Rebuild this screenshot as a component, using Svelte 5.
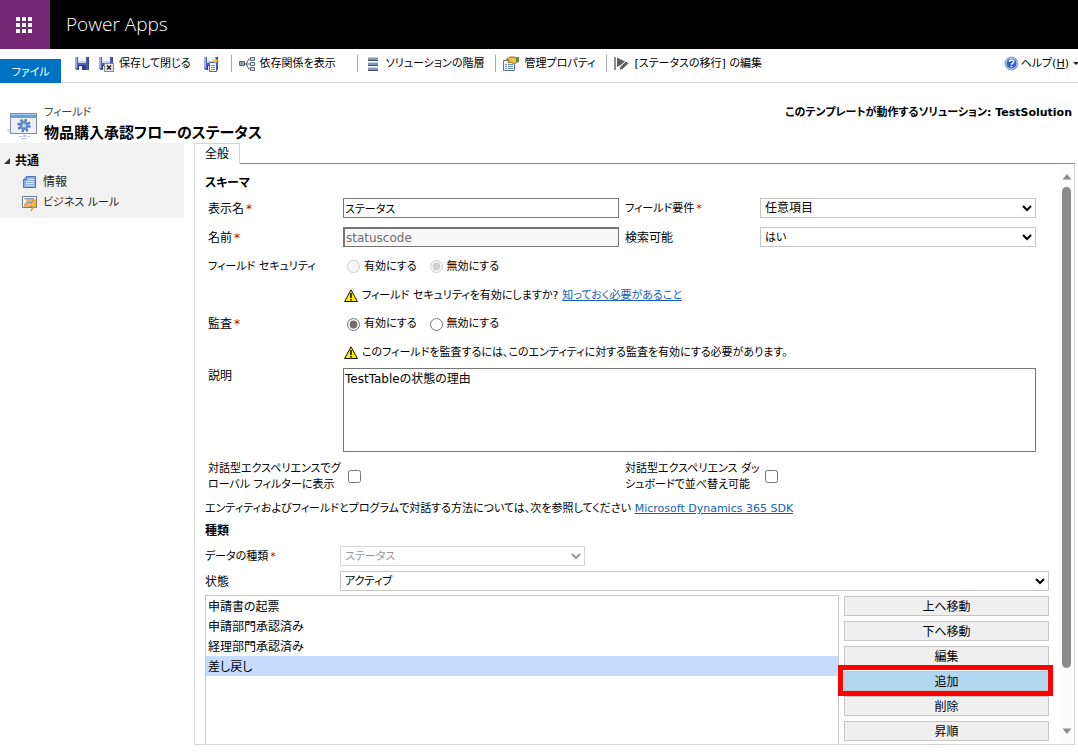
<script lang="ts">
	interface NavItem {
		id: string;
		text: string;
	}

	const navItems: NavItem[] = [
		{ id: 'info', text: '情報' },
		{ id: 'rules', text: 'ビジネス ルール' }
	];

	const statusOptions = ['申請書の起票', '申請部門承認済み', '経理部門承認済み', '差し戻し'];
	const listActions = ['上へ移動', '下へ移動', '編集', '追加', '削除', '昇順'];
	const activeAction = '追加';

	let displayName = $state('ステータス');
	let description = $state('TestTableの状態の理由');
	let requirement = $state('任意項目');
	let searchable = $state('はい');
	let stateValue = $state('アクティブ');
	let security = $state('off');
	let audit = $state('on');
	let selected = $state(['差し戻し']);
	let globalFilter = $state(false);
	let sortable = $state(false);
</script>

{#snippet floppy()}
	<path d="M1 1h14v13H2.500L1 12.500z" fill="#5561b8" />
	<path d="M1 1h2v11.500l-2-1z" fill="#a3abe6" />
	<path d="M13.500 1H15v13h-1.500z" fill="#39439a" />
	<path d="M4 1h8v6H4z" fill="#f3f6fd" />
	<path d="M4 5h8v2H4z" fill="#c6d0f0" />
	<path d="M4 9h8v5H4z" fill="#2f3880" />
	<path d="M5 10h3v4H5z" fill="#e3e8f6" />
{/snippet}

{#snippet warning()}
	<svg class="warn-icon" width="14" height="14" viewBox="0 0 14 14" aria-hidden="true">
		<path d="M7 .8L13.400 12.500H.6z" fill="#ffea00" stroke="#111" stroke-linejoin="round" />
		<path d="M6.200 4h1.600v5H6.200zM6.200 10h1.600v1.500H6.200z" fill="#111" />
	</svg>
{/snippet}

<div class="app">
	<header class="suite-bar">
		<button type="button" class="launcher" aria-label="アプリ起動ツール">
			<svg width="16" height="16" viewBox="0 0 16 16" fill="#fff">
				{#each [0, 6, 12] as y}
					{#each [0, 6, 12] as x}
						<rect {x} {y} width="4" height="4" />
					{/each}
				{/each}
			</svg>
		</button>
		<span class="suite-name">Power Apps</span>
	</header>

	<nav class="ribbon">
		<button type="button" class="file-tab">ファイル</button>
		<div class="tools">
			<button type="button" class="tool save" aria-label="保存">
				<svg width="16" height="16" viewBox="0 0 16 16">{@render floppy()}</svg>
			</button>
			<button type="button" class="tool save-close">
				<svg width="16" height="16" viewBox="0 0 16 16">
					{@render floppy()}
					<rect x="6.500" y="7.500" width="9" height="8" fill="#e4e4e4" stroke="#8a8a8a" />
					<path d="M9 9.500l4 4m0-4l-4 4" stroke="#222" stroke-width="1.500" />
				</svg>
				保存して閉じる
			</button>
			<button type="button" class="tool save-new" aria-label="保存して新規作成">
				<svg width="16" height="16" viewBox="0 0 16 16">
					{@render floppy()}
					<path d="M6.500 6.500h7v9h-7z" fill="#f4f7fd" stroke="#4c6ca8" />
					<path d="M8 9.500h4M8 11.500h4M8 13.500h4" stroke="#6a8ccc" />
					<path d="M12.500 1l1 2.800L16 4.800l-2.500 1-1 2.700-1-2.700L9 4.800l2.500-1z" fill="#f5c54a" />
				</svg>
			</button>
			<button type="button" class="tool ruled dependencies">
				<svg width="16" height="16" viewBox="0 0 16 16">
					<path d="M5 8h6M7 8l3-5h1M7 8l3 5h1" fill="none" stroke="#4f5a6c" />
					<path d="M.5 5.500h5v4h-5z" fill="#8fa3be" stroke="#55667d" />
					<path d="M11.500 1.500h4v3h-4zM11.500 6.500h4v3h-4zM11.500 11.500h4v3h-4z" fill="#dce3ec" stroke="#55667d" />
				</svg>
				依存関係を表示
			</button>
			<button type="button" class="tool ruled hierarchy">
				<svg width="12" height="16" viewBox="0 0 12 16">
					<path d="M1 1h10v4H1zM1 6h10v4H1zM1 11h10v4H1z" fill="#8198bd" />
					<path d="M1 1.500h10M1 6.500h10M1 11.500h10" stroke="#c3d0e4" />
					<path d="M1 4.500h10M1 9.500h10M1 14.500h10" stroke="#424b5e" />
				</svg>
				ソリューションの階層
			</button>
			<button type="button" class="tool ruled">
				<svg width="16" height="16" viewBox="0 0 16 16">
					<path d="M.5 4.500h11v10H.5z" fill="#f5f8fc" stroke="#5c78a4" />
					<path d="M2 8.500h2M5 8.500h5M2 10.500h2M5 10.500h5M2 12.500h2M5 12.500h5" stroke="#6c8cc0" />
					<path d="M3 4l4-3h5l2 2v3l-3 2-3-2-2 1-1-1 1-2z" fill="#eebf48" stroke="#9a7121" />
					<path d="M13 1h3v5l-3 1z" fill="#5b8c4a" />
				</svg>
				管理プロパティ
			</button>
			<button type="button" class="tool ruled">
				<svg width="15" height="16" viewBox="0 0 15 16">
					<path d="M1 1v13" stroke="#666" stroke-width="1.500" />
					<path d="M3 1.500l9 4.500-9 5z" fill="#606060" />
					<path d="M5 14.500l1-4 6-5.500 3 2.500-6.500 6z" fill="#606060" stroke="#fff" />
				</svg>
				[ステータスの移行] の編集
			</button>
		</div>
		<button type="button" class="tool help">
			<svg width="15" height="15" viewBox="0 0 15 15">
				<circle cx="7.500" cy="7.500" r="6.500" fill="#2f62c8" stroke="#8faadc" />
				<circle cx="7.500" cy="7.500" r="5.500" fill="none" stroke="#dce7fb" />
				<path d="M5.500 6c0-2.600 4.200-2.600 4.200-.2 0 1.400-2.200 1.500-2.200 3" fill="none" stroke="#fff" stroke-width="1.500" />
				<path d="M6.700 9.800h1.600v1.500H6.700z" fill="#fff" />
			</svg>
			<span>ヘルプ(<u>H</u>)</span>
			<svg class="caret" width="5" height="4" viewBox="0 0 5 4"><path d="M0 0h6L3 3z" fill="#222" /></svg>
		</button>
	</nav>

	<div class="record-head">
		<svg class="record-icon" width="32" height="28" viewBox="0 0 32 28" aria-hidden="true">
			<path d="M0 18l5-2v6z" fill="#dcdfe3" />
			<rect x="4.500" y="1.500" width="26" height="20" fill="#eef0f3" stroke="#7d8fa6" />
			<path d="M5 2h25v4H5z" fill="#6ba0d4" />
			<path d="M5 2h25v1H5z" fill="#a6cbec" />
			<circle cx="18" cy="13.500" r="5.500" fill="none" stroke="#4a76b8" stroke-width="2.500" stroke-dasharray="2.200 2.120" />
			<circle cx="18" cy="13.500" r="3.500" fill="#c5d8f2" stroke="#5f8ccb" stroke-width="2.500" />
			<circle cx="18" cy="13.500" r="1.500" fill="#fff" stroke="#3f68a8" stroke-width=".5" />
			<path d="M13 24h3v1h-3zM17 23h3v2h-3zM21 24h3v1h-3zM15 26h6v1h-6z" fill="#b9cbe6" />
		</svg>
		<div class="record-titles">
			<span class="entity">フィールド</span>
			<h1>物品購入承認フローのステータス</h1>
		</div>
		<p class="solution">このテンプレートが動作するソリューション: TestSolution</p>
	</div>

	<div class="workspace">
		<aside class="side-nav">
			<h2>
				<svg width="7" height="7" viewBox="0 0 7 7"><path d="M6 0v6H0z" fill="#333" /></svg>
				共通
			</h2>
			{#each navItems as item (item.id)}
				<a href="#{item.id}">
					{#if item.id === 'info'}
						<svg width="16" height="16" viewBox="0 0 16 16">
							<path d="M4.500 2.500h9v11h-12v-8z" fill="#8eace6" stroke="#5570b0" />
							<path d="M4.500 2.500v3h-3z" fill="#e9f0fc" stroke="#5570b0" />
							<path d="M6 5.500h6M4 7.500h8M4 9.500h8M4 11.500h8" stroke="#dbe7fb" />
						</svg>
					{:else}
						<svg width="16" height="16" viewBox="0 0 16 16">
							<path d="M.5 1.500h14v11H.5z" fill="#f1f4f8" stroke="#6b7c96" />
							<path d="M3 4h8v2H5v2h5v3H3V9h4" fill="none" stroke="#e8954b" stroke-width="1.500" />
							<path d="M2 3.500h10M6 7.500h5" stroke="#8c9bb0" />
							<path d="M12 5l-4 6h3l-2 5 6-7h-3l3-4z" fill="#fbcf3c" stroke="#b4801b" stroke-width=".7" />
						</svg>
					{/if}
					<span class:kana={item.id === 'rules'}>{item.text}</span>
				</a>
			{/each}
		</aside>

		<main class="editor">
			<div class="tabs">
				<button type="button" class="tab">全般</button>
			</div>
			<div class="panel">
				<form class="form" onsubmit={(e) => e.preventDefault()}>
					<h3>スキーマ</h3>
					<div class="schema">
						<label for="display-name">表示名<em>*</em></label>
						<input id="display-name" class="kana" type="text" bind:value={displayName} />
						<label class="second kana" for="requirement">フィールド要件<em>*</em></label>
						<select id="requirement" bind:value={requirement}>
							<option>任意項目</option>
						</select>

						<label for="name">名前<em>*</em></label>
						<input id="name" type="text" value="statuscode" disabled />
						<label class="second" for="searchable">検索可能</label>
						<select id="searchable" class="kana" bind:value={searchable}>
							<option>はい</option>
							<option>いいえ</option>
						</select>

						<span id="security-label" class="caption kana">フィールド セキュリティ</span>
						<div class="radios" role="radiogroup" aria-labelledby="security-label">
							<label><input type="radio" bind:group={security} value="on" disabled />有効にする</label>
							<label><input type="radio" bind:group={security} value="off" disabled />無効にする</label>
						</div>
						<p class="notice kana">
							{@render warning()}
							フィールド セキュリティを有効にしますか? <a href="#security">知っておく必要があること</a>
						</p>

						<span id="audit-label" class="caption">監査<em>*</em></span>
						<div class="radios" role="radiogroup" aria-labelledby="audit-label">
							<label><input type="radio" bind:group={audit} value="on" />有効にする</label>
							<label><input type="radio" bind:group={audit} value="off" />無効にする</label>
						</div>
						<p class="notice kana">
							{@render warning()}
							このフィールドを監査するには、このエンティティに対する監査を有効にする必要があります。
						</p>

						<label class="top" for="description">説明</label>
						<textarea id="description" bind:value={description}></textarea>

						<label class="kana" for="global-filter">対話型エクスペリエンスでグ<br />ローバル フィルターに表示</label>
						<input id="global-filter" type="checkbox" bind:checked={globalFilter} />
						<label class="second kana" for="sortable">対話型エクスペリエンス ダッ<br />シュボードで並べ替え可能</label>
						<input id="sortable" type="checkbox" bind:checked={sortable} />
					</div>

					<p class="sdk kana">
						エンティティおよびフィールドとプログラムで対話する方法については、次を参照してください
						<a href="#sdk">Microsoft Dynamics 365 SDK</a>
					</p>

					<h3 class="type-head">種類</h3>
					<div class="type-row">
						<label class="kana" for="data-type">データの種類<em>*</em></label>
						<select id="data-type" class="short kana" disabled>
							<option>ステータス</option>
						</select>
					</div>
					<div class="type-row">
						<label for="state">状態</label>
						<select id="state" class="kana" bind:value={stateValue}>
							<option>アクティブ</option>
							<option>非アクティブ</option>
						</select>
					</div>
					<div class="options">
						<select class="option-list" multiple size="10" aria-label="状態のオプション" bind:value={selected}>
							{#each statusOptions as option}
								<option>{option}</option>
							{/each}
						</select>
						<div class="actions">
							{#each listActions as action}
								<div class="action" class:highlight={action === activeAction}>
									<button type="button">{action}</button>
								</div>
							{/each}
						</div>
					</div>
				</form>
				<div class="scrollbar" aria-hidden="true">
					<svg width="10" height="6" viewBox="0 0 10 6"><path d="M5 0l4.500 5.500h-9z" fill="#8b8b8b" /></svg>
					<div class="track"><div class="thumb"></div></div>
					<svg width="10" height="6" viewBox="0 0 10 6"><path d="M.5.5h9L5 6z" fill="#8b8b8b" /></svg>
				</div>
			</div>
		</main>
	</div>
</div>

<style>
	:global(body) {
		margin: 0;
		background: #fff;
	}

	.app {
		display: flex;
		flex-direction: column;
		box-sizing: border-box;
		height: 100vh;
		padding-bottom: 10px;
		overflow: hidden;
		font-family: 'DejaVu Sans', 'Noto Sans CJK JP', sans-serif;
		font-size: 12px;
		font-feature-settings: 'palt';
		line-height: 16px;
		color: #000;
	}

	svg {
		flex: none;
		display: block;
	}

	button,
	input,
	select,
	textarea {
		margin: 0;
		font: inherit;
		font-feature-settings: inherit;
		color: inherit;
		border-radius: 0;
		box-sizing: border-box;
	}

	h1,
	h2,
	h3,
	p {
		margin: 0;
	}

	a {
		color: #1160b7;
	}

	.kana,
	.tool,
	.file-tab,
	.entity,
	.solution,
	.radios {
		font-size: 11px;
	}

	/* Black suite bar */
	.suite-bar {
		flex: none;
		display: flex;
		align-items: center;
		gap: 16px;
		height: 49px;
		background: #000;
	}

	.launcher {
		display: flex;
		align-items: center;
		justify-content: center;
		width: 50px;
		height: 49px;
		padding: 0 2px 0 0;
		border: 0;
		background: #742774;
	}

	.suite-name {
		padding-bottom: 2px;
		font-family: 'Open Sans', 'Noto Sans', sans-serif;
		font-weight: 300;
		font-size: 19px;
		color: #fff;
	}

	/* Ribbon */
	.ribbon {
		flex: none;
		display: flex;
		align-items: flex-start;
		height: 34px;
		box-sizing: border-box;
		border-bottom: 1px solid #d6d6d6;
	}

	.file-tab {
		flex: none;
		align-self: flex-end;
		width: 61px;
		height: 24px;
		margin-bottom: -1px;
		padding: 4px 0 0;
		border: 0;
		background: #0072c6;
		color: #fff;
	}

	.tools {
		flex: 1;
		display: flex;
		padding: 6px 0 0 13px;
	}

	.tool {
		display: flex;
		align-items: center;
		gap: 5px;
		height: 17px;
		padding: 0;
		border: 0;
		background: none;
		line-height: 17px;
		white-space: nowrap;
	}

	.save {
		margin-right: 8px;
	}

	.save-close,
	.save-new {
		margin-right: 12px;
	}

	.ruled {
		padding: 0 11px 0 7px;
		border-left: 1px solid #a5a8b0;
	}

	.dependencies {
		padding-right: 21px;
	}

	.hierarchy {
		gap: 7px;
		padding-left: 9px;
	}

	.help {
		gap: 2px;
		margin-top: 6px;
	}

	.caret {
		margin-left: 2px;
	}

	/* Record heading */
	.record-head {
		flex: none;
		display: flex;
		height: 60px;
		padding: 0 6px;
	}

	.record-icon {
		margin-top: 29px;
	}

	.record-titles {
		flex: 1;
		display: flex;
		flex-direction: column;
		padding: 22px 0 0 6px;
		white-space: nowrap;
	}

	.entity {
		color: #444;
	}

	h1 {
		font-size: 15px;
		line-height: 24px;
	}

	.solution {
		padding-top: 22px;
		font-weight: bold;
	}

	/* Workspace */
	.workspace {
		flex: 1;
		display: flex;
		align-items: flex-start;
		gap: 10px;
		min-height: 0;
		padding-right: 3px;
	}

	.side-nav {
		flex: none;
		box-sizing: border-box;
		width: 184px;
		padding: 9px 4px 5px;
		background: #f1f1f1;
	}

	.side-nav h2 {
		display: flex;
		align-items: center;
		gap: 4px;
		font-size: 12px;
		line-height: 19px;
	}

	.side-nav a {
		display: flex;
		align-items: center;
		gap: 5px;
		height: 21px;
		padding-left: 18px;
		color: #222;
		text-decoration: none;
	}

	.editor {
		flex: 1;
		align-self: stretch;
		display: flex;
		flex-direction: column;
		min-width: 0;
	}

	.tabs {
		flex: none;
		display: flex;
		height: 21px;
	}

	.tabs::after {
		content: '';
		flex: 1;
		border-bottom: 1px solid #8a8a8f;
	}

	.tab {
		width: 46px;
		height: 21px;
		padding: 0;
		border: 1px solid #d6d6d6;
		border-bottom: 0;
		background: #fff;
	}

	.panel {
		flex: 1;
		display: flex;
		min-height: 0;
		border: 1px solid #d6d6d6;
		border-top: 0;
	}

	.form {
		flex: 1;
		min-width: 0;
		padding: 10px 10px 0;
		overflow: hidden;
	}

	h3 {
		font-size: 12px;
		line-height: 19px;
	}

	em {
		margin-left: 2px;
		font-style: normal;
		color: #b00000;
	}

	.schema {
		display: grid;
		grid-template-columns: 135px minmax(0, 1fr) 141px minmax(0, 1fr);
		grid-template-rows: repeat(4, 29px) 28px 29px 88px 44px;
		align-items: center;
		padding: 0 13px 0 3px;
		white-space: nowrap;
	}

	.schema > label,
	.caption,
	.radios,
	.notice,
	.type-row label {
		padding-top: 2px;
	}

	.schema > .second {
		padding-left: 6px;
	}

	.radios,
	.notice,
	textarea {
		grid-column: 2 / -1;
	}

	.top {
		align-self: start;
	}

	input[type='text'] {
		width: 100%;
		height: 20px;
		padding: 1px 1px 0;
		border: 1px solid #767676;
		background: #fff;
	}

	input[type='text']:disabled {
		border-width: 2px 1px 1px 2px;
		background: #f8f8f8;
		color: #6d6d6d;
	}

	select {
		width: 100%;
		height: 20px;
		padding: 1px 0 0;
		border: 1px solid #c6c6c6;
		background: #fff;
	}

	select:disabled {
		color: #6d6d6d;
	}

	.radios {
		display: flex;
		gap: 9px;
	}

	.radios label {
		display: flex;
		align-items: center;
		gap: 4px;
	}

	input[type='radio'] {
		width: 13px;
		height: 13px;
		margin-left: 4px;
		accent-color: #6f6f6f;
	}

	input[type='checkbox'] {
		width: 13px;
		height: 13px;
		margin-left: 5px;
	}

	.notice {
		display: flex;
		align-items: center;
		gap: 4px;
	}

	.warn-icon {
		margin-left: 1px;
	}

	textarea {
		height: 84px;
		padding: 2px 1px;
		border: 1px solid #767676;
		line-height: 16px;
		resize: none;
	}

	.sdk {
		padding-top: 1px;
		line-height: 20px;
		white-space: nowrap;
	}

	.type-head {
		line-height: 24px;
	}

	.type-row {
		display: flex;
		align-items: center;
		height: 25px;
	}

	.type-row label {
		flex: none;
		width: 135px;
	}

	.short {
		width: 245px;
	}

	.options {
		display: flex;
		align-items: flex-start;
		gap: 5px;
		padding-top: 2px;
	}

	.option-list {
		flex: 1;
		height: 202px;
		padding: 0;
		overflow: hidden;
	}

	.option-list option {
		height: 20px;
		min-height: 20px;
		padding: 1px 2px 0;
		box-sizing: border-box;
		line-height: 20px;
	}

	.option-list option:checked {
		background: #c5dcff linear-gradient(#c5dcff, #c5dcff);
		color: #000;
	}

	.actions {
		flex: none;
		display: flex;
		flex-direction: column;
		gap: 5px;
		width: 205px;
		padding-top: 1px;
	}

	.action {
		position: relative;
		display: flex;
	}

	.action button {
		flex: 1;
		height: 20px;
		padding: 2px 0 0;
		border: 1px solid #c6c6c6;
		background: #efefef;
	}

	.highlight {
		z-index: 1;
	}

	.highlight button {
		background: #b1d6f0;
	}

	/* Red frame over the button to press */
	.highlight::after {
		content: '';
		position: absolute;
		inset: -6px -4px -5px -6px;
		border: 5px solid #f00;
		pointer-events: none;
	}

	.scrollbar {
		flex: none;
		display: flex;
		flex-direction: column;
		align-items: center;
		gap: 7px;
		width: 15px;
		padding: 10px 0;
		box-sizing: border-box;
		background: #fcfcfc;
	}

	.track {
		flex: 1;
	}

	.thumb {
		width: 9px;
		height: 90%;
		border-radius: 5px;
		background: #8b8b8b;
	}
</style>
